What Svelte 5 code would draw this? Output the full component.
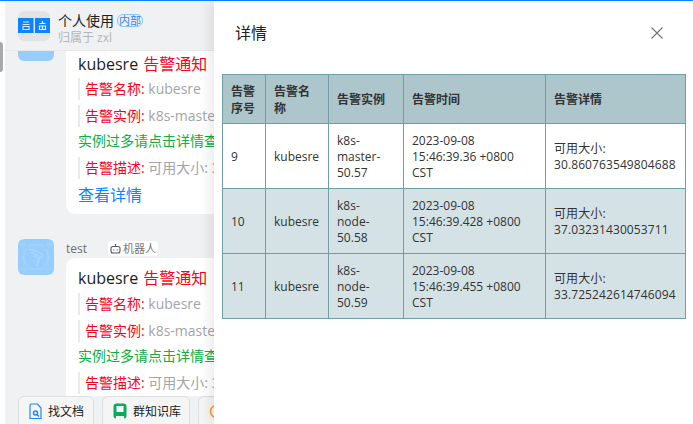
<script>
  const rows = [
    { id: 9, name: 'kubesre', inst: 'k8s-master-50.57', time: '2023-09-08 15:46:39.36 +0800 CST', val: '30.860763549804688' },
    { id: 10, name: 'kubesre', inst: 'k8s-node-50.58', time: '2023-09-08 15:46:39.428 +0800 CST', val: '37.03231430053711' },
    { id: 11, name: 'kubesre', inst: 'k8s-node-50.59', time: '2023-09-08 15:46:39.455 +0800 CST', val: '33.725242614746094' }
  ];
</script>

{#snippet card()}
  <div class="title">kubesre <span class="red">告警通知</span></div>
  <div class="quote"><span class="red">告警名称:</span> kubesre</div>
  <div class="quote"><span class="red">告警实例:</span> k8s-master-50.57</div>
  <div class="green">实例过多请点击详情查看</div>
  <div class="quote"><span class="red">告警描述:</span> 可用大小: 30.86</div>
{/snippet}

<div class="page">
  <div class="topline"></div>
  <div class="main">
    <div class="rail"><div class="thumb"></div></div>
    <div class="chat">
      <header class="head">
        <div class="logo">
          <svg width="32" height="30" viewBox="0 0 32 30">
            <rect x="0" y="7" width="15.500" height="15" fill="#0a84ff"/>
            <rect x="17" y="7" width="15" height="15" fill="#0a84ff"/>
            <path d="M5 11h6M4.500 13.500h7M5 15.500h6v3H5z" stroke="#d5e9ff" stroke-width="1.100" fill="none"/>
            <path d="M24.500 10v2M21.500 12.500h6M21.500 15h6v3.500h-6zM24.500 15v3.500" stroke="#eef6ff" stroke-width="1.200" fill="none"/>
          </svg>
        </div>
        <div class="headtext">
          <div class="hname">个人使用<span class="inner">内部</span></div>
          <div class="hsub">归属于 zxl</div>
        </div>
      </header>
      <div class="scroll">
        <div class="msg first">
          <div class="ava top"></div>
          <div class="bubble done">
            {@render card()}
            <div class="link">查看详情</div>
          </div>
        </div>
        <div class="msg second">
          <div class="ava">
            <svg width="36" height="36" viewBox="0 0 36 36" fill="none" stroke="#c3e2fd" stroke-width="1">
              <path d="M6 0v36M30 0v36M0 6h36M0 30h36" opacity=".25"/>
              <circle cx="18" cy="18" r="12.500" opacity=".4"/>
              <path d="M11 10.500c5 .5 10 2.500 14 5.500l-3 3-3.500 8M13 13.500c3 .5 6 2 9 5M15 17c2 .5 4 1.500 6 3.500M17 20.500c1 .5 2 1 3 2.500" opacity=".7"/>
            </svg>
          </div>
          <div class="body">
            <div class="meta">
              <span class="who">test</span>
              <span class="bot">
                <svg width="11" height="11" viewBox="0 0 11 11" fill="none" stroke="#555" stroke-width="1.100">
                  <rect x="1" y="3.500" width="9" height="6.500" rx="2"/><path d="M5.500 3.500V1"/><path d="M3.800 6.500v1M7.200 6.500v1"/>
                </svg>机器人</span>
            </div>
            <div class="bubble">{@render card()}</div>
          </div>
        </div>
      </div>
      <div class="tools">
        <span class="tool w1">
          <svg width="13" height="17" viewBox="0 0 13 17" fill="none" stroke="#1e88f5" stroke-width="1.200">
            <path d="M2.500 1h6l3.500 4v10.500H1V2.500a1.500 1.500 0 0 1 1.500-1.500z"/><circle cx="6.500" cy="10" r="2" stroke-width="1.500"/><path d="M8 11.500l2 2" stroke-width="1.500"/>
          </svg>找文档</span>
        <span class="tool w2">
          <svg width="14" height="17" viewBox="0 0 14 17">
            <rect x="0.500" y="0.500" width="13" height="15" rx="3" fill="#0eaa5c"/>
            <rect x="3.500" y="3" width="7" height="6" fill="#fff"/>
            <rect x="3" y="13" width="8" height="3" fill="#f5f5f6"/>
          </svg>群知识库</span>
        <span class="tool w3">
          <svg width="15" height="17" viewBox="0 0 15 17" fill="none" stroke="#f09a1a" stroke-width="1.500"><circle cx="7.500" cy="8.500" r="6"/><path d="M5 7h5M7.500 7v4"/></svg>
        </span>
      </div>
    </div>
  </div>

  <aside class="drawer">
    <div class="dhead">
      <h2>详情</h2>
      <svg class="close" width="14" height="14" viewBox="0 0 14 14" stroke="#6f7479" stroke-width="1.100" fill="none"><path d="M1.500 1.500l11 11M12.500 1.500l-11 11"/></svg>
    </div>
    <table>
      <colgroup><col class="c1"/><col class="c2"/><col class="c3"/><col class="c4"/><col class="c5"/></colgroup>
      <thead>
        <tr><th>告警序号</th><th>告警名称</th><th>告警实例</th><th>告警时间</th><th>告警详情</th></tr>
      </thead>
      <tbody>
        {#each rows as r}
          <tr>
            <td>{r.id}</td>
            <td>{r.name}</td>
            <td class="inst">{r.inst}</td>
            <td>{r.time}</td>
            <td class="val">可用大小:<br/>{r.val}</td>
          </tr>
        {/each}
      </tbody>
    </table>
  </aside>
</div>

<style>
  :global(body) { margin: 0; }
  .page {
    position: relative;
    width: 693px;
    height: 424px;
    overflow: hidden;
    background: #fff;
    font-family: "Open Sans", "Noto Sans CJK SC", sans-serif;
    display: flex;
    flex-direction: column;
  }
  .topline { height: 1px; background: #0a84ff; flex: none; }
  .main { flex: 1; display: flex; min-height: 0; }
  .rail { width: 5px; flex: none; background: #fff; padding-top: 41px; box-sizing: border-box; }
  .thumb { width: 3px; height: 30px; background: #a9a9a9; border-radius: 0 3px 3px 0; }
  .chat { flex: 1; min-width: 0; background: #f0f1f3; display: flex; flex-direction: column; overflow: hidden; }
  .head {
    height: 50px; flex: none; box-sizing: border-box; padding: 10px 0 0 13px;
    display: flex; gap: 8px; border-bottom: 1px solid #e6e7e9;
  }
  .logo { width: 32px; height: 30px; border-radius: 6px; background: #e1e4e7; overflow: hidden; }
  .logo svg { display: block; }
  .hname { font-size: 14px; line-height: 19px; color: #222; display: flex; align-items: center; }
  .inner {
    font-size: 11px; line-height: 11px; color: #1e88f5; border: 1px solid #8cc3fa;
    border-radius: 6px; padding: 0 1px; margin-left: 3px;
  }
  .hsub { font-size: 12px; line-height: 16px; color: #b4b6b9; }
  .scroll { flex: 1; min-height: 0; overflow: hidden; }
  .msg { display: flex; padding-left: 13px; gap: 12px; }
  .ava { width: 36px; height: 36px; border-radius: 6px; background: #96cdfd; flex: none; overflow: hidden; }
  .ava.top { height: 10px; border-radius: 0 0 6px 6px; }
  .bubble {
    width: 148px; box-sizing: border-box; background: #fff; padding: 2px 0 0 12px;
    font-size: 14px; color: #a3a5a8; white-space: nowrap; overflow: hidden;
  }
  .bubble.done { border-radius: 0 0 0 9px; height: 163px; }
  .second { margin-top: 25px; }
  .meta { height: 19px; display: flex; align-items: center; gap: 21px; font-size: 11px; color: #6d6f72; }
  .who { font-size: 12px; }
  .bot {
    display: inline-flex; align-items: center; gap: 2px; background: #fff; border-radius: 3px;
    padding: 0 2px; font-size: 11px; line-height: 15px; color: #777;
  }
  .second .bubble { border-radius: 9px 0 0 0; height: 138px; padding-top: 9px; }
  .second .title { margin-bottom: 4px; }
  .title { font-size: 16px; line-height: 22px; color: #1c1d21; margin-bottom: 3px; }
  .title .red { margin-left: 1px; }
  .red { color: #f5061c; }
  .quote {
    border-left: 2px solid #e9e9ea; padding-left: 5px; line-height: 22px; height: 22px;
    margin-bottom: 5px;
  }
  .green { font-size: 14px; line-height: 18px; color: #0dae42; margin: 4px 0 7px; }
  .link { font-size: 16px; line-height: 22px; color: #0a84ff; margin-top: 5px; }
  .tools { height: 28px; flex: none; display: flex; gap: 8px; padding-left: 13px; align-items: flex-start; overflow: hidden; }
  .tool {
    box-sizing: border-box; height: 32px; display: inline-flex; gap: 6px; padding: 6px 0 0 10px;
    background: #f5f5f6; border: 1px solid #dddedf; border-radius: 6px; font-size: 12px; line-height: 17px; color: #222;
    flex: none;
  }
  .w1 { width: 76px; }
  .w2 { width: 88px; }
  .w3 { width: 30px; }
  .drawer {
    position: absolute; top: 1px; left: 214px; right: 0; bottom: 0; background: #fff;
    box-shadow: -6px 0 10px rgba(0, 0, 0, .07);
  }
  .dhead { height: 73px; box-sizing: border-box; padding: 22px 29px 0 21px; display: flex; justify-content: space-between; }
  h2 { margin: 0; font-size: 16px; font-weight: 400; line-height: 20px; color: #222; }
  .close { margin-top: 3px; }
  table {
    margin-left: 8px; width: 463px; table-layout: fixed; border-collapse: collapse;
    font-size: 12px; line-height: 16px; color: #333;
    border: 1px solid #6f9ea4;
  }
  .c1 { width: 43px; } .c2 { width: 63px; } .c3 { width: 75px; } .c4 { width: 142px; } .c5 { width: 140px; }
  th, td { border: 1px solid #6f9ea4; padding: 0 8px; text-align: left; overflow-wrap: anywhere; }
  th { height: 49px; background: #adc6cb; font-weight: 700; font-size: 12px; line-height: 17px; padding-top: 1px; box-sizing: border-box; }
  td { height: 65px; padding-top: 1px; box-sizing: border-box; }
  td.inst { padding-right: 14px; }
  td.val { padding-right: 0; letter-spacing: .1px; }
  tbody tr:nth-child(even), tbody tr:nth-child(3) { background: #d4e2e6; }
</style>
